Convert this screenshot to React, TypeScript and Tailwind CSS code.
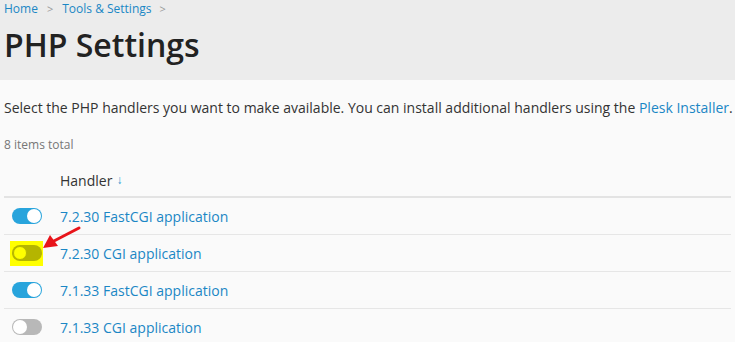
import React from 'react';

type Row = { label: string; on: boolean; marked?: boolean };

const rows: Row[] = [
  { label: '7.2.30 FastCGI application', on: true },
  { label: '7.2.30 CGI application', on: false, marked: true },
  { label: '7.1.33 FastCGI application', on: true },
  { label: '7.1.33 CGI application', on: false },
];

function Toggle({ on, marked }: { on: boolean; marked?: boolean }) {
  if (marked) {
    return (
      <div className="w-[33px] h-[25px] bg-[#ffff00] flex items-center justify-center">
        <div className="w-[30px] h-[16px] rounded-full bg-[#b5b500] flex items-center p-[1px]">
          <div className="w-[14px] h-[14px] rounded-full bg-[#ffff00] border border-[#b5b500]" />
        </div>
      </div>
    );
  }
  return (
    <div className="w-[33px] h-[25px] flex items-center justify-center">
      <div
        className={
          on
            ? 'w-[30px] h-[16px] rounded-full bg-[#28a4dc] flex items-center justify-end p-[1px]'
            : 'w-[30px] h-[16px] rounded-full bg-[#b8b8b8] flex items-center justify-start p-[1px]'
        }
      >
        <div className="w-[14px] h-[14px] rounded-full bg-white" />
      </div>
    </div>
  );
}

export default function App() {
  return (
    <div className="w-[735px] h-[342px] overflow-hidden bg-[#fafafa] font-['Open_Sans',sans-serif] relative">
      <div className="bg-[#ececec] h-[80px] px-[4px]">
        <div className="flex items-center text-[12px] leading-[18px] text-[#1b87c5]">
          <span>Home</span>
          <span className="text-[#9a9a9a] text-[11px] mx-[9px]">&gt;</span>
          <span>Tools &amp; Settings</span>
          <span className="text-[#9a9a9a] text-[11px] ml-[8px]">&gt;</span>
        </div>
        <h1 className="text-[32px] font-semibold leading-[40px] text-[#222] mt-[7px]">PHP Settings</h1>
      </div>

      <p className="text-[14px] text-[#333] px-[4px] mt-[18px] leading-[20px] whitespace-nowrap">
        Select the PHP handlers you want to make available. You can install additional handlers using the{' '}
        <span className="text-[#1b87c5]">Plesk Installer</span>.
      </p>

      <div className="text-[12px] text-[#777] px-[4px] mt-[19px] leading-[16px]">8 items total</div>

      <div className="mt-[11px] mx-[4px]">
        <div className="h-[34px] border-b-2 border-[#e3e3e3] flex items-center pl-[56px] text-[14px] text-[#333]">
          Handler <span className="text-[#2f96d0] text-[12px] ml-[4px]">↓</span>
        </div>
        {rows.map((r) => (
          <div key={r.label} className="h-[37px] border-b border-[#e6e6e6] flex items-center">
            <div className="pl-[6px] w-[56px]">
              <Toggle on={r.on} marked={r.marked} />
            </div>
            <span className="text-[14px] text-[#1b87c5]">{r.label}</span>
          </div>
        ))}
      </div>

      <svg className="absolute left-[40px] top-[222px]" width="44" height="30" viewBox="0 0 44 30">
        <line x1="39" y1="6" x2="12" y2="20" stroke="#e8141a" strokeWidth="3" strokeLinecap="round" />
        <polygon points="3,26 10,13 18,24" fill="#e8141a" />
      </svg>
    </div>
  );
}
